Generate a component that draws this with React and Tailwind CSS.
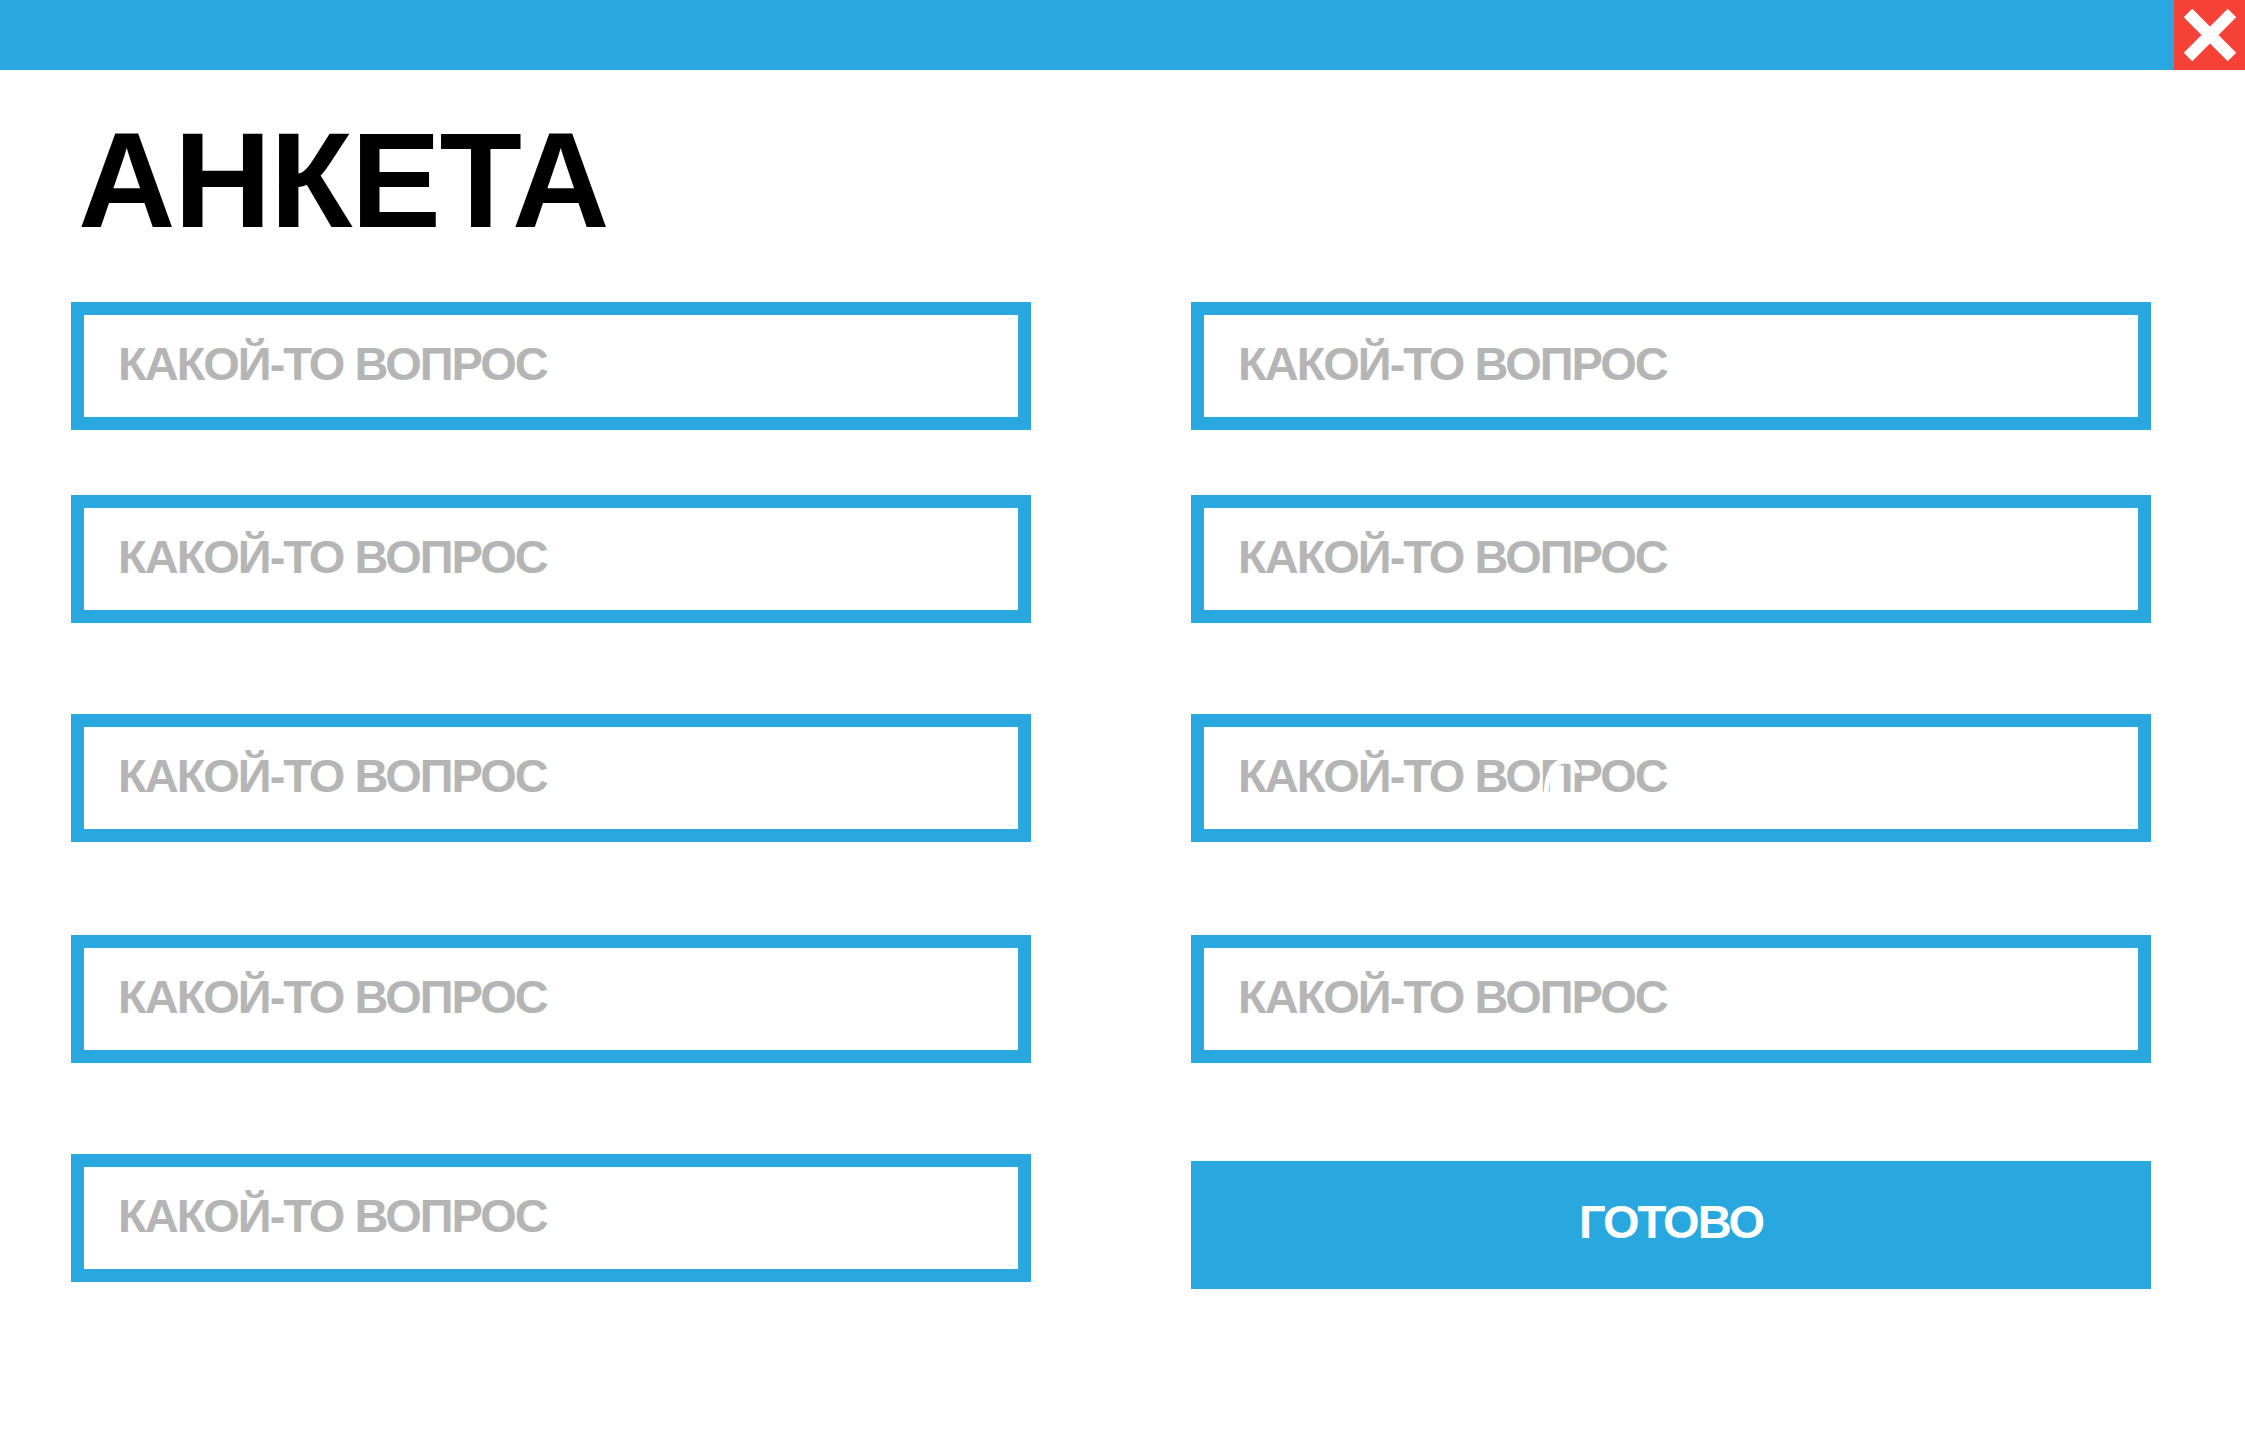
import React from "react";

const font = { fontFamily: '"Liberation Sans", Arial, sans-serif' };

const Question = ({ className = "", glitch = false }) => (
  <div className={`relative h-[128px] w-[960px] ${className}`}>
    <input
      type="text"
      placeholder="КАКОЙ-ТО ВОПРОС"
      className="h-full w-full border-[13px] border-[#29a8e0] bg-white pb-[5px] pl-[34px] text-[47px] font-bold uppercase tracking-[-2px] text-black outline-none placeholder:text-[#b5b5b5]"
      style={font}
    />
    {/* stray white arc seen over the text in one field */}
    {glitch && (
      <svg
        className="pointer-events-none absolute left-[346px] top-[38px]"
        width="46"
        height="50"
        viewBox="0 0 46 50"
        fill="none"
      >
        <path d="M9 46 C9 21 17 9 28 9 C36 9 40 15 41 21" stroke="white" strokeWidth="5" />
      </svg>
    )}
  </div>
);

export default function App() {
  return (
    <div className="min-h-[1451px] w-[2245px] bg-white" style={font}>
      {/* top bar */}
      <div className="flex h-[70px] w-full justify-end bg-[#29a8e0]">
        <button className="flex h-[70px] w-[71px] items-center justify-center bg-[#f64236]" aria-label="Close">
          <svg width="71" height="70" viewBox="0 0 71 70">
            <path d="M14 13 L58 57 M58 13 L14 57" stroke="white" strokeWidth="12" />
          </svg>
        </button>
      </div>

      <div className="pl-[71px]">
        <h1 className="ml-[7px] mt-[43px] h-[135px] text-[135px] font-bold leading-none tracking-[-1.5px] text-black">
          АНКЕТА
        </h1>

        <div className="mt-[54px] flex gap-[160px]">
          <div className="flex flex-col">
            <Question />
            <Question className="mt-[65px]" />
            <Question className="mt-[91px]" />
            <Question className="mt-[93px]" />
            <Question className="mt-[91px]" />
          </div>
          <div className="flex flex-col">
            <Question />
            <Question className="mt-[65px]" />
            <Question className="mt-[91px]" glitch />
            <Question className="mt-[93px]" />
            <button className="mt-[98px] h-[128px] w-[960px] bg-[#29a8e0] pb-[5px] text-[47px] font-bold tracking-[-2px] text-white">
              ГОТОВО
            </button>
          </div>
        </div>
      </div>
    </div>
  );
}
